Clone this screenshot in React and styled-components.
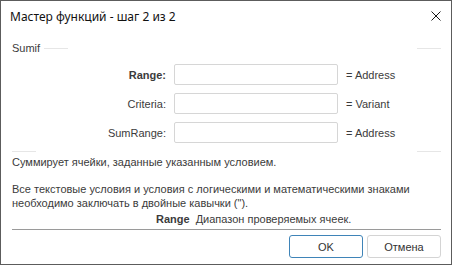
import React from "react";
import styled, { createGlobalStyle } from "styled-components";

const GlobalStyle = createGlobalStyle`
  html, body {
    margin: 0;
    padding: 0;
    background: #ffffff;
  }
  * {
    box-sizing: border-box;
  }
`;

const args = [
  { id: 0, name: "Range", type: "Address", bold: true },
  { id: 1, name: "Criteria", type: "Variant" },
  { id: 2, name: "SumRange", type: "Address" },
];

export default function App() {
  return (
    <>
      <GlobalStyle />
      <Window>
        <TitleBar>
          <Title>Мастер функций - шаг 2 из 2</Title>
          <CloseButton aria-label="close">
            <svg width="10" height="10" viewBox="0 0 10 10">
              <path d="M0.5 0.5 L9.5 9.5 M9.5 0.5 L0.5 9.5" stroke="#1a1a1a" strokeWidth="1" />
            </svg>
          </CloseButton>
        </TitleBar>

        <Body>
          <Group>
            <GroupHeader>
              <Legend>Sumif</Legend>
              <Tick />
              <Spacer />
              <Tick />
            </GroupHeader>
            <ArgGrid>
              {args.map(({ id, name, type, bold }) => (
                <React.Fragment key={id}>
                  <ArgLabel $bold={bold}>{name}:</ArgLabel>
                  <ArgInput type="text" />
                  <ArgType>= {type}</ArgType>
                </React.Fragment>
              ))}
            </ArgGrid>
            <GroupFooter>
              <Tick />
              <Spacer />
              <Tick />
            </GroupFooter>
          </Group>

          <Text>Суммирует ячейки, заданные указанным условием.</Text>
          <Note>
            Все текстовые условия и условия с логическими и математическими знаками
            <br />
            необходимо заключать в двойные кавычки (").
          </Note>
          <ArgHelp>
            <b>Range</b>Диапазон проверяемых ячеек.
          </ArgHelp>
          <Separator />
          <Buttons>
            <Button $primary>OK</Button>
            <Button>Отмена</Button>
          </Buttons>
        </Body>
      </Window>
    </>
  );
}

const Window = styled.div`
  width: 452px;
  height: 265px;
  border: 1px solid #5c5c5c;
  background: #ffffff;
  display: flex;
  flex-direction: column;
  font-family: "Liberation Sans", Arial, sans-serif;
  font-size: 11px;
  color: #3b3b3b;
`;

const TitleBar = styled.div`
  height: 30px;
  display: flex;
  align-items: center;
  justify-content: space-between;
  padding: 0 10px 0 9px;
`;

const Title = styled.div`
  font-family: "Noto Sans", "Liberation Sans", sans-serif;
  font-size: 12px;
  color: #111111;
`;

const CloseButton = styled.div`
  width: 10px;
  height: 10px;
  display: flex;
`;

const Body = styled.div`
  flex: 1;
  padding: 0 10px 0 11px;
  display: flex;
  flex-direction: column;
`;

const Group = styled.div`
  margin-top: 10px;
  display: flex;
  flex-direction: column;
`;

const GroupHeader = styled.div`
  height: 14px;
  display: flex;
  align-items: center;
`;

const Legend = styled.span`
  margin-right: 4px;
`;

const Tick = styled.div`
  width: 24px;
  height: 1px;
  background: #e6e6e6;
`;

const Spacer = styled.div`
  flex: 1;
`;

const GroupFooter = styled.div`
  margin-top: 8px;
  height: 1px;
  display: flex;
`;

const ArgGrid = styled.div`
  margin-top: 9px;
  display: grid;
  grid-template-columns: 154px 164px auto;
  grid-auto-rows: 21px;
  column-gap: 8px;
  row-gap: 8px;
  align-items: center;
`;

const ArgLabel = styled.label`
  text-align: right;
  font-weight: ${(p) => (p.$bold ? 700 : 400)};
`;

const ArgInput = styled.input`
  width: 164px;
  height: 21px;
  border: 1px solid #d6d6d6;
  border-radius: 2px;
  background: #ffffff;
  margin: 0;
  padding: 0 4px;
  outline: none;
`;

const ArgType = styled.span``;

const Text = styled.p`
  margin: 3px 0 0;
  line-height: 14px;
`;

const Note = styled.p`
  margin: 13px 0 0;
  line-height: 14px;
`;

const ArgHelp = styled.p`
  margin: 2px 0 0;
  padding-left: 144px;
  line-height: 14px;

  b {
    margin-right: 6px;
  }
`;

const Separator = styled.div`
  margin-top: 3px;
  height: 1px;
  background: #9a9a9a;
`;

const Buttons = styled.div`
  margin-top: 5px;
  display: flex;
  justify-content: flex-end;
  gap: 4px;
`;

const Button = styled.button`
  width: 74px;
  height: 23px;
  border: 1px solid ${(p) => (p.$primary ? "#3f84b8" : "#d4d4d4")};
  border-radius: 3px;
  background: #ffffff;
  font-family: "Liberation Sans", Arial, sans-serif;
  font-size: 11px;
  color: #333333;
  padding: 0;
`;
